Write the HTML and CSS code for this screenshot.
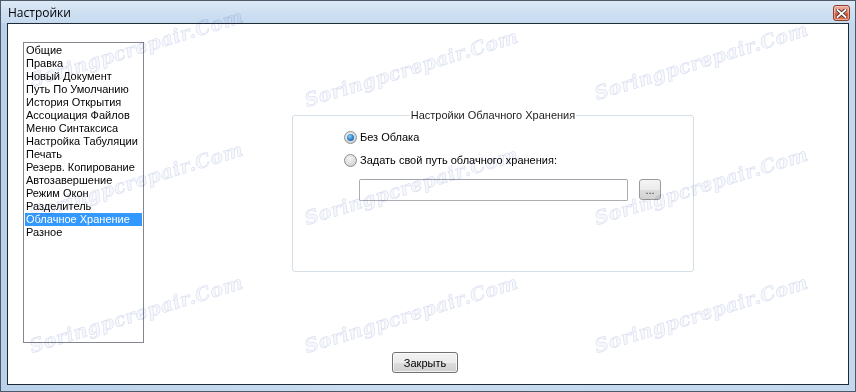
FILE: index.html
```html
<!DOCTYPE html>
<html lang="ru">
<head>
<meta charset="utf-8">
<title>Настройки</title>
<link rel="stylesheet" href="styles.css">
</head>
<body>
<div class="window">
  <div class="titlebar">
    <span class="title">Настройки</span>
    <button class="close-btn" aria-label="Закрыть">
      <svg width="11" height="9" viewBox="0 0 11 9">
        <path d="M1.5 1 L9.5 8 M9.5 1 L1.5 8" stroke="#4a2f2a" stroke-width="3.6" stroke-linecap="square"/>
        <path d="M1.5 1 L9.5 8 M9.5 1 L1.5 8" stroke="#ffffff" stroke-width="1.8" stroke-linecap="square"/>
      </svg>
    </button>
  </div>
  <div class="client">
    <div class="main">
      <ul class="nav-list">
        <li>Общие</li>
        <li>Правка</li>
        <li>Новый Документ</li>
        <li>Путь По Умолчанию</li>
        <li>История Открытия</li>
        <li>Ассоциация Файлов</li>
        <li>Меню Синтаксиса</li>
        <li>Настройка Табуляции</li>
        <li>Печать</li>
        <li>Резерв. Копирование</li>
        <li>Автозавершение</li>
        <li>Режим Окон</li>
        <li>Разделитель</li>
        <li class="selected">Облачное Хранение</li>
        <li>Разное</li>
      </ul>
      <div class="group">
        <div class="group-title">Настройки Облачного Хранения</div>
        <div class="radio-row"><span class="radio checked"></span><span>Без Облака</span></div>
        <div class="radio-row"><span class="radio"></span><span>Задать свой путь облачного хранения:</span></div>
        <div class="path-row">
          <div class="path-input"></div>
          <button class="browse">...</button>
        </div>
      </div>
    </div>
    <div class="footer">
      <button class="btn">Закрыть</button>
    </div>
  </div>
  <div class="watermarks">
    <span class="wm wm1">Soringpcrepair.Com</span>
    <span class="wm wm2">Soringpcrepair.Com</span>
    <span class="wm wm3">Soringpcrepair.Com</span>
    <span class="wm wm4">Soringpcrepair.Com</span>
    <span class="wm wm5">Soringpcrepair.Com</span>
    <span class="wm wm6">Soringpcrepair.Com</span>
    <span class="wm wm7">Soringpcrepair.Com</span>
    <span class="wm wm8">Soringpcrepair.Com</span>
    <span class="wm wm9">Soringpcrepair.Com</span>
  </div>
</div>
</body>
</html>
```

FILE: styles.css
```css
* { box-sizing: border-box; }
html, body { margin: 0; padding: 0; }
body {
  width: 856px;
  height: 392px;
  overflow: hidden;
  font-family: "Liberation Sans", Arial, sans-serif;
  font-size: 11px;
  color: #000;
  background: #fff;
}
.window {
  position: relative;
  width: 856px;
  height: 392px;
  border: 1px solid #4d5966;
  background: linear-gradient(90deg, #b9d1ea 0%, #c9dcf0 40%, #c3d8ee 100%);
  display: flex;
  flex-direction: column;
  overflow: hidden;
}
.titlebar {
  height: 22px;
  flex: none;
  display: flex;
  align-items: flex-start;
  justify-content: space-between;
  background: linear-gradient(180deg, #dde9f6 0%, #cfe0f2 50%, #c6daef 100%);
}
.title {
  font-family: "Open Sans", "Noto Sans", sans-serif;
  font-size: 12px;
  line-height: 16px;
  margin: 4px 0 0 7px;
  color: #000;
}
.close-btn {
  width: 17px;
  height: 16px;
  margin: 4px 5px 0 0;
  padding: 0;
  border: 1px solid #8a3f2e;
  border-radius: 3px;
  background: linear-gradient(180deg, #eeae9c 0%, #e2886f 45%, #cf5a3d 55%, #dc7455 100%);
  display: flex;
  align-items: center;
  justify-content: center;
  box-shadow: inset 0 0 0 1px rgba(255, 220, 210, 0.5);
}
.close-btn svg { display: block; }
.client {
  flex: 1;
  margin: 0 6px 6px 6px;
  border: 1px solid #1e2a36;
  background: #fff;
  padding: 18px 0 0 15px;
  display: flex;
  flex-direction: column;
}
.main {
  display: flex;
  align-items: flex-start;
}
.nav-list {
  list-style: none;
  margin: 0;
  padding: 1px 0 0 0;
  width: 121px;
  height: 301px;
  border: 1px solid #828790;
  flex: none;
}
.nav-list li {
  height: 13px;
  line-height: 13px;
  margin: 0 1px;
  padding-left: 1px;
  white-space: nowrap;
}
.nav-list li.selected {
  background: #3399ff;
  color: #fff;
}
.group {
  margin: 73px 0 0 148px;
  width: 402px;
  height: 157px;
  border: 1px solid #d5dfe5;
  border-radius: 3px;
  padding: 0 0 0 51px;
  display: flex;
  flex-direction: column;
  align-items: flex-start;
}
.group-title {
  align-self: center;
  margin: -8px 0 0 -51px;
  padding: 0 1px;
  line-height: 14px;
  background: #fff;
  color: #1e1e1e;
}
.radio-row {
  display: flex;
  align-items: center;
  height: 16px;
  margin-top: 7px;
  gap: 3px;
}
.radio {
  width: 13px;
  height: 13px;
  border-radius: 50%;
  border: 1px solid #8e8f8f;
  background: radial-gradient(circle at 40% 35%, #f4f4f4 0%, #dcdcdc 55%, #c8c8c8 100%);
  display: flex;
  align-items: center;
  justify-content: center;
  flex: none;
}
.radio.checked::after {
  content: "";
  width: 7px;
  height: 7px;
  border-radius: 50%;
  background: radial-gradient(circle at 40% 35%, #8ad2f8 0%, #2a7fc8 55%, #174f8a 100%);
}
.path-row {
  display: flex;
  align-items: flex-start;
  margin: 11px 0 0 15px;
  gap: 11px;
}
.path-input {
  width: 269px;
  height: 22px;
  border: 1px solid #abadb3;
  border-top-color: #a0a4ab;
  border-radius: 2px;
  background: #fff;
}
.browse {
  width: 22px;
  height: 21px;
  padding: 0;
  border: 1px solid #9a9a9a;
  border-radius: 3px;
  background: linear-gradient(180deg, #f4f4f4 0%, #ebebeb 50%, #dddddd 51%, #d3d3d3 100%);
  font-family: "Liberation Sans", Arial, sans-serif;
  font-size: 11px;
  line-height: 14px;
  color: #333;
}
.footer {
  display: flex;
  padding: 9px 0 0 369px;
}
.btn {
  width: 66px;
  height: 21px;
  padding: 0;
  border: 1px solid #707070;
  border-radius: 3px;
  background: linear-gradient(180deg, #f2f2f2 0%, #ebebeb 50%, #dddddd 51%, #cfcfcf 100%);
  box-shadow: inset 0 0 0 1px rgba(255, 255, 255, 0.7);
  font-family: "Liberation Sans", Arial, sans-serif;
  font-size: 11px;
  color: #000;
}
.watermarks {
  position: absolute;
  inset: 0;
  pointer-events: none;
}
.wm {
  position: absolute;
  width: 180px;
  text-align: center;
  font-family: "DejaVu Serif", "Liberation Serif", serif;
  font-style: italic;
  font-weight: bold;
  font-size: 19px;
  letter-spacing: 0.5px;
  color: #f6f7fc;
  -webkit-text-stroke: 0.5px rgba(185, 196, 226, 0.6);
  mix-blend-mode: multiply;
  transform: rotate(-17deg);
  white-space: nowrap;
}
.wm1 { left: 25px;  top: 42px; }
.wm2 { left: 300px; top: 62px; }
.wm3 { left: 590px; top: 55px; }
.wm4 { left: 25px;  top: 175px; }
.wm5 { left: 300px; top: 180px; }
.wm6 { left: 590px; top: 180px; }
.wm7 { left: 25px;  top: 308px; }
.wm8 { left: 300px; top: 308px; }
.wm9 { left: 590px; top: 308px; }
```
